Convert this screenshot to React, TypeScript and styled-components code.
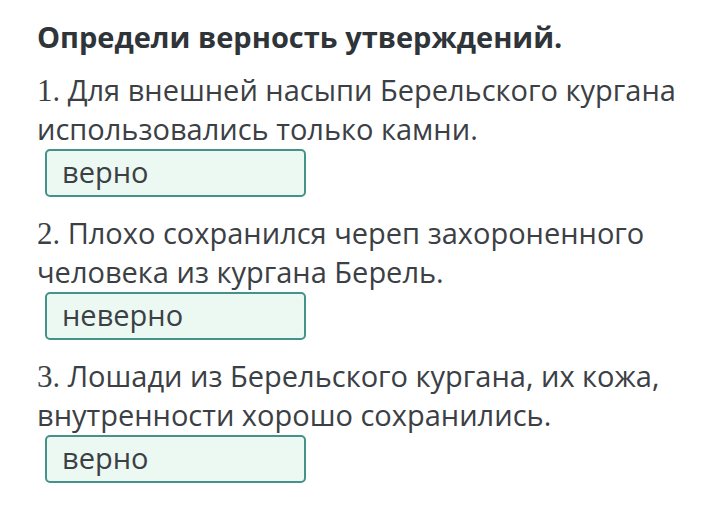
import React from "react";
import styled, { createGlobalStyle } from "styled-components";

const Global = createGlobalStyle`
  html, body { margin: 0; padding: 0; background: #ffffff; }
  body { font-family: "Open Sans", "Noto Sans", sans-serif; }
`;

const Page = styled.main`
  width: 720px;
  height: 517px;
  box-sizing: border-box;
  padding: 17px 0 0 37px;
  background: #ffffff;
  color: #3b4045;
`;

const Title = styled.h1`
  margin: 0 0 13px;
  font-size: 29px;
  line-height: 40px;
  font-weight: 700;
  color: #2f3439;
`;

const List = styled.div`
  display: flex;
  flex-direction: column;
  gap: 16px;
`;

const Item = styled.section`
  display: flex;
  flex-direction: column;
`;

const Question = styled.p`
  margin: 0;
  font-size: 29px;
  line-height: 39px;
  font-weight: 400;
  width: 670px;
`;

const Num = styled.span`
  font-family: "Liberation Serif", "DejaVu Serif", serif;
  font-size: 31px;
  line-height: 1;
`;

const Answer = styled.div`
  box-sizing: border-box;
  margin: 1px 0 0 8px;
  width: 261px;
  height: 48px;
  display: flex;
  align-items: center;
  padding: 0 0 2px 15px;
  border: 2px solid #44938b;
  border-radius: 5px;
  background: #ecf9f3;
  font-size: 29px;
  line-height: 40px;
  color: #3b4045;
`;

const items = [
  {
    n: "1",
    text: "Для внешней насыпи Берельского кургана использовались только камни.",
    answer: "верно",
  },
  {
    n: "2",
    text: "Плохо сохранился череп захороненного человека из кургана Берель.",
    answer: "неверно",
  },
  {
    n: "3",
    text: "Лошади из Берельского кургана, их кожа, внутренности хорошо сохранились.",
    answer: "верно",
  },
];

export default function App() {
  return (
    <>
      <Global />
      <Page>
        <Title>Определи верность утверждений.</Title>
        <List>
          {items.map((it) => (
            <Item key={it.n}>
              <Question>
                <Num>{it.n}</Num>. {it.text}
              </Question>
              <Answer>{it.answer}</Answer>
            </Item>
          ))}
        </List>
      </Page>
    </>
  );
}
